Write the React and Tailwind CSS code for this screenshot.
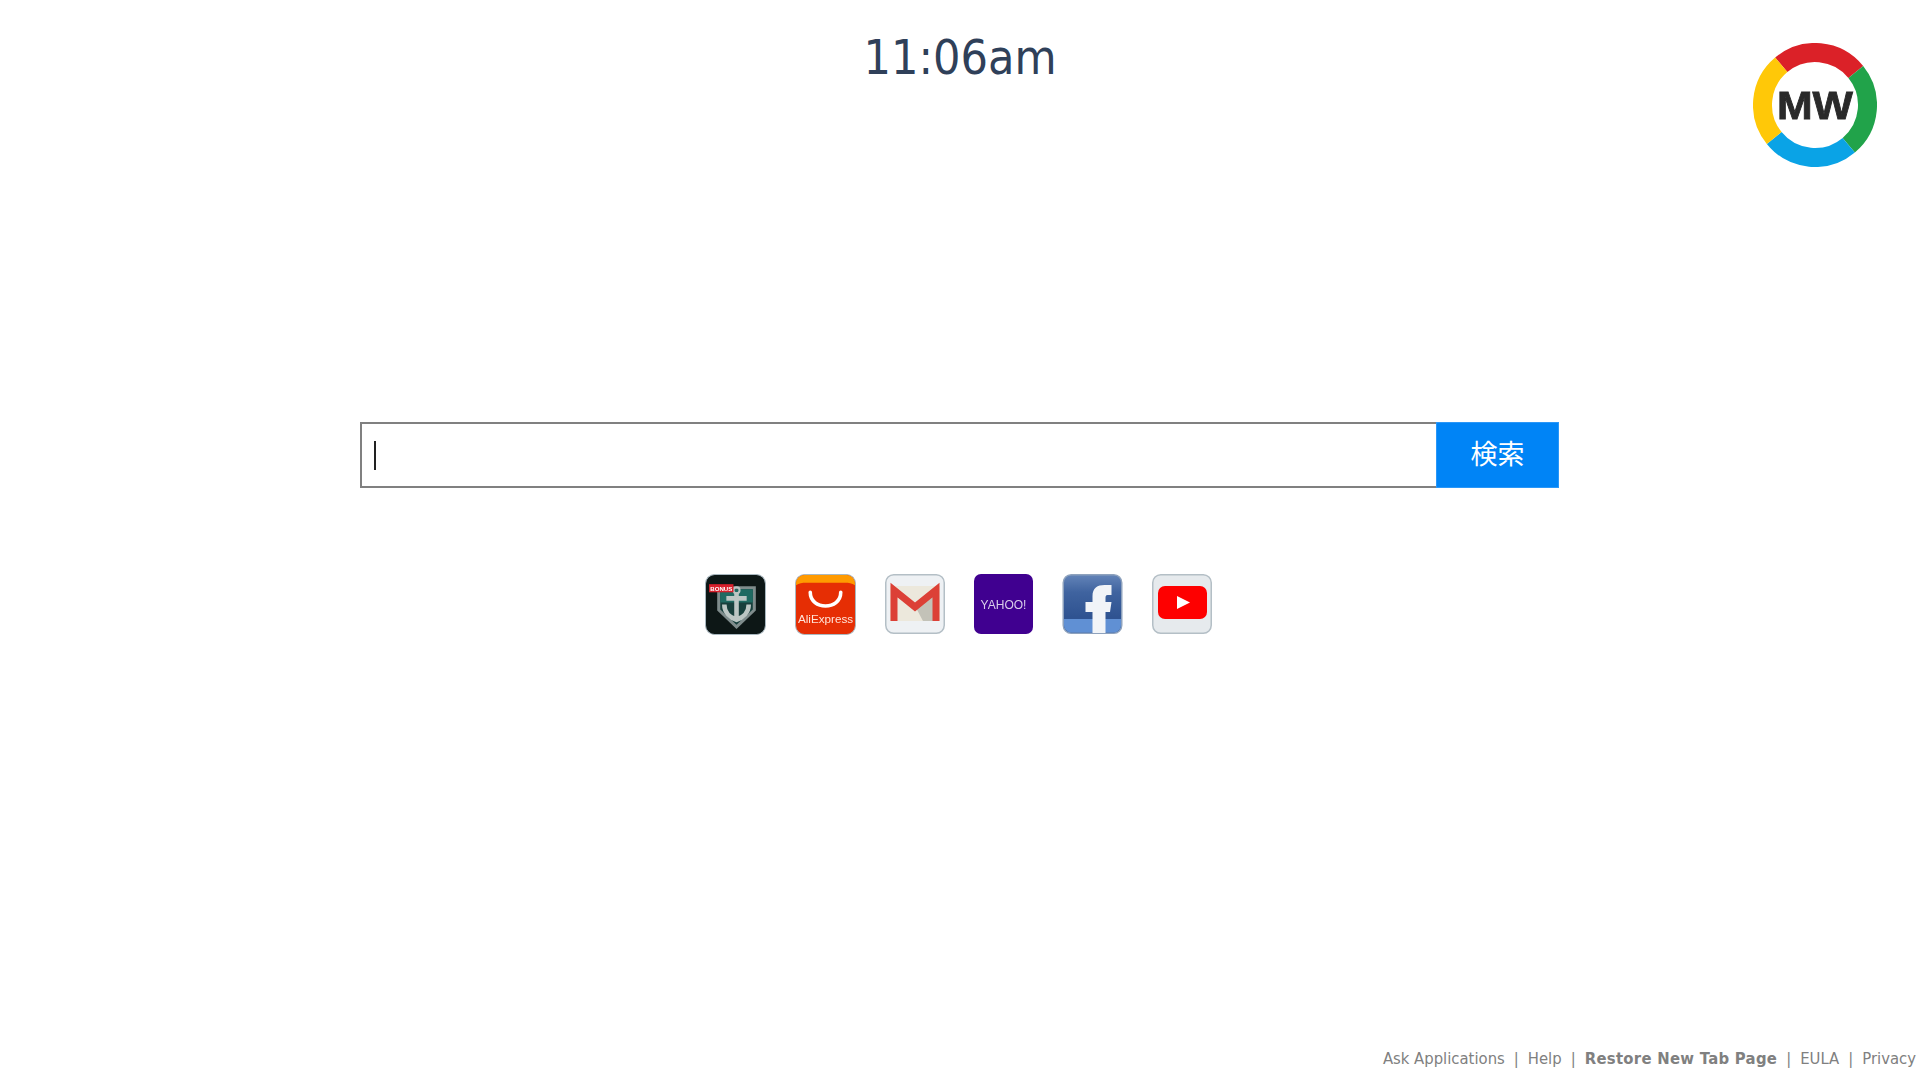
import React from 'react'

const sans = "font-['DejaVu_Sans'] font-stretch-condensed"

// ring segments of the MW logo, angles measured from 3 o'clock
const arc = (from, to, r = 52.5) => {
  const rad = (a) => (a * Math.PI) / 180
  const x1 = 62 + r * Math.cos(rad(from))
  const y1 = 62 + r * Math.sin(rad(from))
  const x2 = 62 + r * Math.cos(rad(to))
  const y2 = 62 + r * Math.sin(rad(to))
  return `M${x1} ${y1}A${r} ${r} 0 0 1 ${x2} ${y2}`
}

const Logo = () => (
  <svg width="124" height="124" viewBox="0 0 124 124" className="blur-[0.4px]">
    <g fill="none" strokeWidth="19">
      <path d={arc(-130, -39)} stroke="#db2128" />
      <path d={arc(-39, 50)} stroke="#21a34a" />
      <path d={arc(50, 141)} stroke="#0aa3e6" />
      <path d={arc(141, 230)} stroke="#ffc808" />
    </g>
    <text x="62" y="75.500" textAnchor="middle" fontFamily="Liberation Sans" fontWeight="700" fontSize="38" fill="#2a2a2a" stroke="#2a2a2a" strokeWidth="0.8" textLength="76" lengthAdjust="spacingAndGlyphs">MW</text>
  </svg>
)

const Warships = () => (
  <svg width="61" height="61" viewBox="0 0 60 60" className="blur-[0.4px]">
    <rect x="0.5" y="0.5" width="59" height="59" rx="9" fill="#0d1716" stroke="#a9b8c0" />
    <path d="M12 12H50V36L31 54L12 36Z" fill="#7f8c8c" />
    <path d="M15 15H47V35L31 50L15 35Z" fill="#173f3c" />
    <path d="M15 15H47V28H15Z" fill="#1f6a62" />
    <circle cx="31" cy="16" r="3" fill="none" stroke="#b9c3c1" strokeWidth="2" />
    <path d="M31 18V45M21 24H41M19 30C19 38 25 43 31 45C37 43 43 38 43 30" fill="none" stroke="#bcc6c4" strokeWidth="4.500" />
    <rect x="4" y="10" width="24" height="8" fill="#d8202c" />
    <text x="16" y="16.500" textAnchor="middle" fontFamily="Liberation Sans" fontWeight="700" fontSize="6" fill="#fff">BONUS</text>
  </svg>
)

const AliExpress = () => (
  <svg width="61" height="61" viewBox="0 0 60 60" className="blur-[0.4px]">
    <rect x="0.5" y="0.5" width="59" height="59" rx="9" fill="#e62e04" stroke="#a9b8c0" />
    <path d="M1 11V9.500C1 4.800 4.800 1 9.500 1H50.500C55.200 1 59 4.800 59 9.500V11C56 9 53 8.500 49 8.500H11C7 8.500 4 9 1 11Z" fill="#ff9a00" />
    <path d="M15 18C15 36 45 36 45 18" fill="none" stroke="#fff" strokeWidth="3.500" strokeLinecap="round" />
    <text x="30" y="48" textAnchor="middle" fontFamily="Liberation Sans" fontSize="11.500" fill="#ffe3d8">AliExpress</text>
  </svg>
)

const Gmail = () => (
  <svg width="60" height="60" viewBox="0 0 60 60" className="blur-[0.4px]">
    <rect x="0.75" y="0.75" width="58.500" height="58.500" rx="8" fill="#eef1f4" stroke="#b4bfc6" strokeWidth="1.500" />
    <rect x="5" y="12" width="50" height="35" fill="#ece8dc" />
    <path d="M30 32L50 16V47H38Z" fill="#c3c2b8" />
    <path d="M9 47V16L30 33L51 16V47" fill="none" stroke="#dc4036" strokeWidth="7" />
  </svg>
)

const Yahoo = () => (
  <svg width="59" height="60" viewBox="0 0 59 60" className="blur-[0.3px]">
    <rect width="59" height="60" rx="7" fill="#400090" />
    <text x="29.500" y="35" textAnchor="middle" fontFamily="Liberation Sans" fontSize="12" fill="#d9cdea">YAHOO!</text>
  </svg>
)

const Facebook = () => (
  <svg width="61" height="60" viewBox="0 0 60 60" className="blur-[0.4px]">
    <defs>
      <linearGradient id="fb" x1="0" y1="0" x2="0" y2="1">
        <stop offset="0" stopColor="#6384b8" />
        <stop offset="0.3" stopColor="#3f639f" />
        <stop offset="0.72" stopColor="#2f5391" />
      </linearGradient>
    </defs>
    <rect x="0.75" y="0.75" width="58.500" height="58.500" rx="8" fill="url(#fb)" stroke="#8ea2bd" strokeWidth="1.500" />
    <path d="M1.500 45H58.500V51C58.500 55 55 58.500 51 58.500H9C5 58.500 1.500 55 1.500 51Z" fill="#6090d4" />
    <path d="M30 59V38H23V28H30V22C30 14 35 11 42 11H49V21H45C43.500 21 43 22 43 24V28H49L47.500 38H43V59Z" fill="#f1f4f8" />
  </svg>
)

const Youtube = () => (
  <svg width="60" height="60" viewBox="0 0 60 60" className="blur-[0.3px]">
    <rect x="0.75" y="0.75" width="58.500" height="58.500" rx="8" fill="#e6eaed" stroke="#b4bfc6" strokeWidth="1.500" />
    <rect x="6" y="12" width="49" height="33" rx="7" fill="#fe0000" />
    <path d="M25 22L38 28.500L25 35Z" fill="#fff" />
  </svg>
)

const links = [
  { label: 'Ask Applications' },
  { label: 'Help' },
  { label: 'Restore New Tab Page', bold: true },
  { label: 'EULA' },
  { label: 'Privacy' },
]

const App = () => {
  return (
    <div className={`${sans} flex h-[1078px] flex-col overflow-hidden bg-white`}>
      <header className="grid grid-cols-[1fr_auto_1fr]">
        <div />
        <div className="pt-[24px] text-[48px] leading-[66px] text-[#2f4059]">11:06am</div>
        <div className="flex justify-end pr-[43px] pt-[43px]">
          <Logo />
        </div>
      </header>

      <div className="mt-[255px] flex justify-center pr-[1px]">
        <div className="flex h-[66px] w-[1199px]">
          <div className="flex flex-1 items-center border-2 border-r-0 border-[#808080] pl-[12px]">
            <span className="h-[29px] w-[2px] bg-[#222]" />
          </div>
          <button className="w-[123px] border border-[#2a97f8] bg-[#0084f6] pb-[4px] font-['Noto_Sans_CJK_JP',sans-serif] text-[27px] text-white">
            検索
          </button>
        </div>
      </div>

      <div className="mt-[86px] flex justify-center gap-[29px] pr-[3px]">
        <Warships />
        <AliExpress />
        <Gmail />
        <Yahoo />
        <Facebook />
        <Youtube />
      </div>

      <footer className="mt-auto flex items-center justify-end pb-[7px] pr-[4px] text-[16.5px] leading-[24px] text-[#808080]">
        {links.map((l, i) => (
          <React.Fragment key={l.label}>
            {i > 0 && <span className="px-[9px]">|</span>}
            <a href="#" className={l.bold ? 'font-bold tracking-[0.3px]' : ''}>{l.label}</a>
          </React.Fragment>
        ))}
      </footer>
    </div>
  )
}

export default App
